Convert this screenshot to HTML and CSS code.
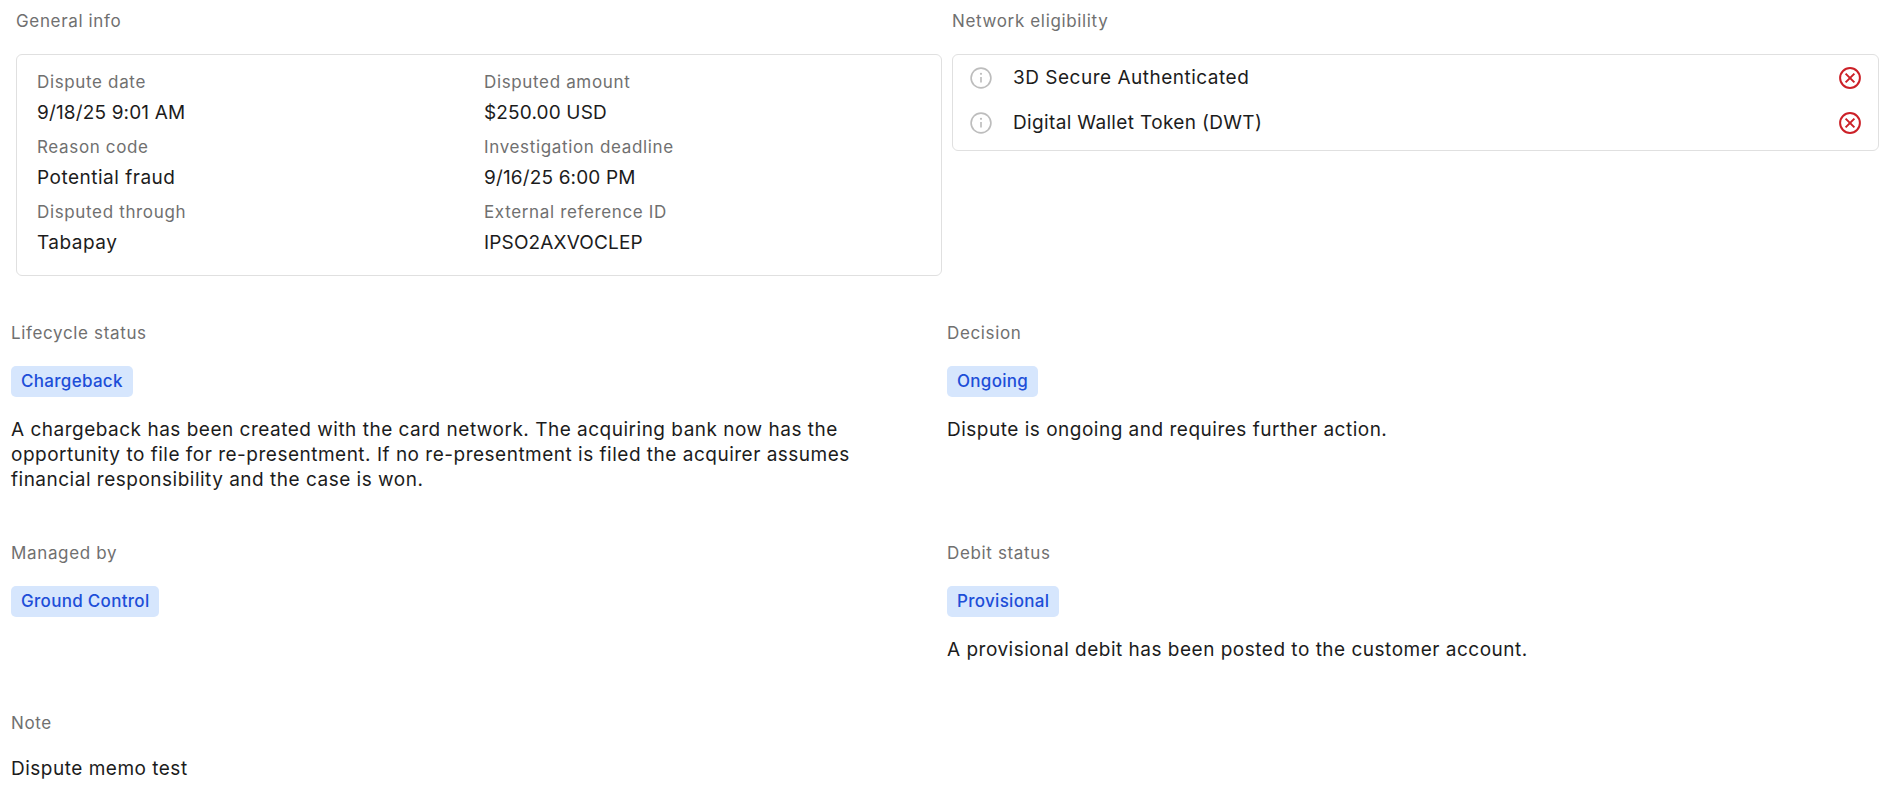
FILE: index.html
```html
<!DOCTYPE html>
<html lang="en">
<head>
<meta charset="utf-8">
<title>Dispute details</title>
<link rel="stylesheet" href="styles.css">
</head>
<body>
<main class="page">
  <div class="top-row">
    <section class="top-col">
      <h3 class="label head">General info</h3>
      <div class="card info-grid">
        <div class="field"><div class="label">Dispute date</div><div class="value tight">9/18/25 9:01 AM</div></div>
        <div class="field"><div class="label">Disputed amount</div><div class="value tight">$250.00 USD</div></div>
        <div class="field"><div class="label">Reason code</div><div class="value">Potential fraud</div></div>
        <div class="field"><div class="label">Investigation deadline</div><div class="value tight">9/16/25 6:00 PM</div></div>
        <div class="field"><div class="label">Disputed through</div><div class="value">Tabapay</div></div>
        <div class="field"><div class="label">External reference ID</div><div class="value tight">IPSO2AXVOCLEP</div></div>
      </div>
    </section>
    <section class="top-col">
      <h3 class="label head">Network eligibility</h3>
      <div class="card elig">
        <div class="elig-row">
          <svg class="icon" viewBox="0 0 20 20"><circle cx="10" cy="10" r="9" class="info-ring"/><path d="M10 9v5" class="info-ring"/><circle cx="10" cy="6.2" r="1" class="info-dot"/></svg>
          <span class="value elig-text">3D Secure Authenticated</span>
          <svg class="icon" viewBox="0 0 20 20"><circle cx="10" cy="10" r="9" class="x-ring"/><path d="M6 6l8 8M14 6l-8 8" class="x-ring"/></svg>
        </div>
        <div class="elig-row">
          <svg class="icon" viewBox="0 0 20 20"><circle cx="10" cy="10" r="9" class="info-ring"/><path d="M10 9v5" class="info-ring"/><circle cx="10" cy="6.2" r="1" class="info-dot"/></svg>
          <span class="value elig-text tight-some">Digital Wallet Token (DWT)</span>
          <svg class="icon" viewBox="0 0 20 20"><circle cx="10" cy="10" r="9" class="x-ring"/><path d="M6 6l8 8M14 6l-8 8" class="x-ring"/></svg>
        </div>
      </div>
    </section>
  </div>
  <div class="status-grid">
    <section class="block tall">
      <h3 class="label head">Lifecycle status</h3>
      <span class="badge">Chargeback</span>
      <p class="value para">A chargeback has been created with the card network. The acquiring bank now has the opportunity to file for re-presentment. If no re-presentment is filed the acquirer assumes financial responsibility and the case is won.</p>
    </section>
    <section class="block tall">
      <h3 class="label head">Decision</h3>
      <span class="badge">Ongoing</span>
      <p class="value para">Dispute is ongoing and requires further action.</p>
    </section>
    <section class="block">
      <h3 class="label head">Managed by</h3>
      <span class="badge">Ground Control</span>
    </section>
    <section class="block">
      <h3 class="label head">Debit status</h3>
      <span class="badge">Provisional</span>
      <p class="value para">A provisional debit has been posted to the customer account.</p>
    </section>
    <section class="block">
      <h3 class="label head">Note</h3>
      <p class="value para note">Dispute memo test</p>
    </section>
  </div>
</main>
</body>
</html>
```
FILE: styles.css
```css
* { box-sizing: border-box; }
html, body { margin: 0; background: #fff; }
body { font-family: "Inter", "Liberation Sans", sans-serif; color: #1c1c1c; }
.page { width: 1895px; height: 791px; overflow: hidden; padding: 9px 16px 0 11px; }
.label { font-size: 17px; font-weight: 400; line-height: 24px; letter-spacing: 0.65px; color: #707070; margin: 0; }
.value { font-size: 19px; line-height: 25px; letter-spacing: 0.5px; color: #1c1c1c; margin: 0; }
.value.tight { letter-spacing: 0.15px; }
.value.tight-some { letter-spacing: 0.35px; }
.top-row { display: grid; grid-template-columns: 936px 932px; }
.top-col { padding-left: 5px; }
.head { margin-bottom: 21px; }
.card { border: 1px solid #e0e0e0; border-radius: 6px; }
.info-grid { display: grid; grid-template-columns: 447px 1fr; padding: 15px 20px 10px; height: 222px; width: 926px; grid-auto-rows: 65px; }
.field .label { margin-bottom: 6px; }
.elig { width: 927px; height: 97px; }
.elig-row { display: flex; align-items: center; height: 45px; padding: 0 17px 0 17px; }
.icon { width: 22px; height: 22px; flex: none; fill: none; }
.elig-text { flex: 1; margin-left: 21px; }
.info-ring { fill: none; stroke: #bdbdbd; stroke-width: 1.5; }
.info-dot { fill: #bdbdbd; }
.x-ring { fill: none; stroke: #cc2027; stroke-width: 1.8; }
.status-grid { display: grid; grid-template-columns: 936px 932px; margin-top: 45px; }
.block { height: 220px; }
.block:nth-child(n+3) { height: 170px; }
.block .head { margin-bottom: 21px; }
.badge { display: inline-block; height: 31px; line-height: 31px; padding: 0 10px; border-radius: 5px; background: #d6e6fd; color: #1d4ed8; font-size: 17px; font-weight: 500; letter-spacing: 0.3px; }
.para { margin-top: 20px; max-width: 860px; }
.note { margin-top: 0; }
```
